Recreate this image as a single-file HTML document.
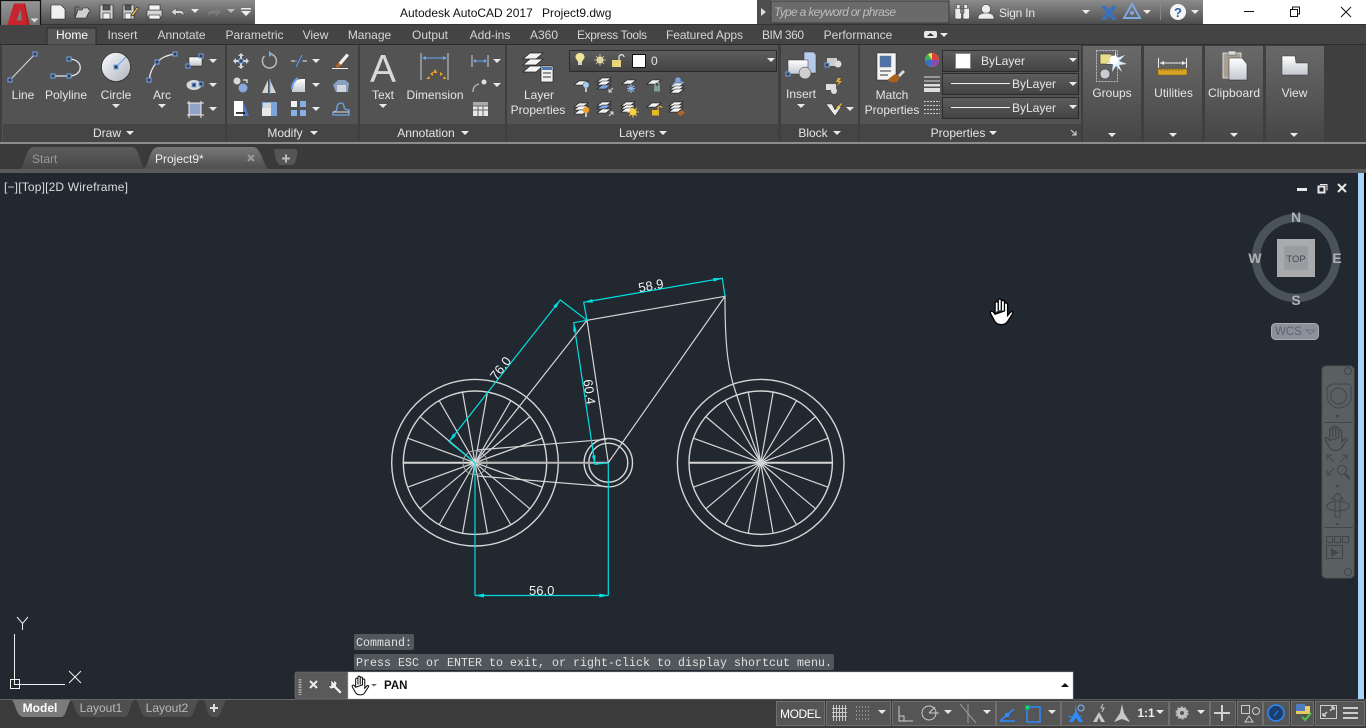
<!DOCTYPE html>
<html><head><meta charset="utf-8"><title>Autodesk AutoCAD 2017</title>
<style>
html,body{margin:0;padding:0;background:#212830;width:1366px;height:728px;overflow:hidden}
svg{display:block;position:absolute;left:0;top:0}
text{font-family:"Liberation Sans",sans-serif;font-size:12px;fill:#e4e6e8}
.m{text-anchor:middle}
.t{fill:#d4d6d8}
.d{fill:#f0f0f0;font-size:13px;text-anchor:middle}
.c{font-family:"Liberation Mono",monospace;font-size:11.6px;fill:#e0e0e0}
.g{fill:none;stroke:#e8e8e8;stroke-width:1.3}
.b{fill:none;stroke:#5f9ef5;stroke-width:1.2}
.s{fill:none;stroke:#c4c4c4;stroke-width:1.4}
</style></head><body>
<svg width="1366" height="728" viewBox="0 0 1366 728" xmlns="http://www.w3.org/2000/svg">
<defs>
<linearGradient id="gT" x1="0" y1="0" x2="0" y2="1"><stop offset="0" stop-color="#8b8b8b"/><stop offset=".5" stop-color="#6d6d6d"/><stop offset="1" stop-color="#4c4c4c"/></linearGradient>
<linearGradient id="gP" x1="0" y1="0" x2="0" y2="1"><stop offset="0" stop-color="#696969"/><stop offset="1" stop-color="#464646"/></linearGradient>
<linearGradient id="gD" x1="0" y1="0" x2="0" y2="1"><stop offset="0" stop-color="#5e5e5e"/><stop offset="1" stop-color="#434343"/></linearGradient>
<linearGradient id="gC" x1="0" y1="0" x2="1" y2="1"><stop offset="0" stop-color="#fbfcff"/><stop offset="1" stop-color="#aeb3bd"/></linearGradient>
<linearGradient id="gF" x1="0" y1="0" x2="0" y2="1"><stop offset="0" stop-color="#ffffff"/><stop offset="1" stop-color="#c3c7cf"/></linearGradient>
<linearGradient id="gA" x1="0" y1="0" x2="0" y2="1"><stop offset="0" stop-color="#969696"/><stop offset="1" stop-color="#5a5a5a"/></linearGradient>
<linearGradient id="gTab" x1="0" y1="0" x2="0" y2="1"><stop offset="0" stop-color="#787878"/><stop offset="1" stop-color="#4e4e4e"/></linearGradient>
<linearGradient id="gTab2" x1="0" y1="0" x2="0" y2="1"><stop offset="0" stop-color="#5c5c5c"/><stop offset="1" stop-color="#484848"/></linearGradient>
<path id="a" d="M-4-2h8l-4 4z" fill="#eaeaea"/>
<rect id="h" x="-2" y="-2" width="4" height="4" fill="#3c3c3c" stroke="#6aa6f8" stroke-width="1"/>
<path id="pl" d="M0 4l5-4h9l-5 4z" fill="#f6f6f6" stroke="#111" stroke-width=".6"/>
<path id="pb" d="M0 4l5-4h9l-5 4z" fill="#7ba4dd" stroke="#111" stroke-width=".6"/>
<path id="hand" d="M7 13V5.500a1.200 1.200 0 0 1 2.400 0V11M9.400 11V3.500a1.200 1.200 0 0 1 2.400 0V11M11.800 11V4.500a1.200 1.200 0 0 1 2.400 0V11.500M14.200 11.500V6.500a1.200 1.200 0 0 1 2.400 0V15l2.200-2.500c1-1 2.500 0 1.600 1.200L17 19c-1 2-3 3-5 3-3 0-5-1-6-4L3.500 13.500c-.7-1.400 1-2.400 2-1.300L7 14z"/>
<g id="wheel" fill="none" stroke="#d6d6d6" stroke-width="1.200">
<circle r="83.300" stroke-width="1.400"/><circle r="71.700" stroke-width="1.400"/>
<line y1="-71.700" y2="71.700" transform="rotate(10)"/><line y1="-71.700" y2="71.700" transform="rotate(30)"/><line y1="-71.700" y2="71.700" transform="rotate(50)"/><line y1="-71.700" y2="71.700" transform="rotate(70)"/><line y1="-71.700" y2="71.700" transform="rotate(90)" stroke-width="2"/><line y1="-71.700" y2="71.700" transform="rotate(110)"/><line y1="-71.700" y2="71.700" transform="rotate(130)"/><line y1="-71.700" y2="71.700" transform="rotate(150)"/><line y1="-71.700" y2="71.700" transform="rotate(170)"/>
</g>
</defs>

<!-- title bar -->
<rect width="1366" height="25" fill="#fff"/>
<rect width="255" height="24" fill="url(#gT)"/>
<rect x="757" width="446" height="24" fill="url(#gT)"/>
<rect y="24" width="1366" height="1" fill="#333"/>
<rect x="757" width="14" height="24" fill="#4e4e4e"/>
<path d="M761 8l5 4-5 4z" fill="#ddd"/>
<rect x="771" y="1" width="178" height="22" fill="#6a6a6a" stroke="#3c3c3c"/>
<text x="774" y="16" style="font-style:italic;fill:#bcbcbc" textLength="122">Type a keyword or phrase</text>
<text x="400" y="17" style="fill:#111">Autodesk AutoCAD 2017</text>
<text x="542" y="17" style="fill:#111">Project9.dwg</text>

<!-- QAT -->
<g stroke="#222" stroke-width=".6">
<path d="M51 5h10l4 4v10H51z" fill="#f0f0f0"/>
<path d="M75 18l3-8h4l1-2h5l1 2h1v2h-1l-3 6z" fill="#cfcfcf"/><path d="M75 18V7h5" fill="none"/>
<path d="M100 5h13v14h-13z" fill="#d0d0d0"/><rect x="103" y="5" width="7" height="5" fill="#555"/><rect x="103" y="13" width="7" height="6" fill="#eee"/>
<path d="M123 5h11v14h-11z" fill="#d0d0d0"/><rect x="125" y="5" width="6" height="5" fill="#555"/><rect x="125" y="13" width="6" height="6" fill="#eee"/><path d="M131 15l6-8 2 1-6 8z" fill="#e6b94a"/>
<rect x="147" y="10" width="15" height="7" rx="1" fill="#d5d5d5"/><rect x="149" y="5" width="11" height="5" fill="#f4f4f4"/><rect x="149" y="15" width="11" height="4" fill="#f4f4f4"/>
</g>
<path d="M171 12l5-4v2.500h4c3 0 4 2 4 6-1-2-2-3-4-3h-4V16z" fill="#d8d8d8" stroke="#333" stroke-width=".5"/>
<path d="M221 12l-5-4v2.500h-4c-3 0-4 2-4 6 1-2 2-3 4-3h4V16z" fill="#7c7c7c"/>
<use href="#a" x="195" y="11"/><use href="#a" x="231" y="11" opacity=".6"/>
<path d="M241 8h10v1.500h-10zM241 11h10l-5 5z" fill="#eee"/>

<!-- A button -->
<rect x=".5" y=".5" width="40" height="40" fill="url(#gA)" stroke="#111" stroke-width="1.200"/>
<path d="M5 32L14 3.500H25L31 32H24L22.800 25H15L12 32zM16.500 20.500H22L20.500 10z" fill="#c8242e" fill-rule="evenodd"/>
<path d="M24 3.500H25L31 32H28.500z" fill="#a51b23"/>
<path d="M30.500 18.500h8l-4 4z" fill="#ddd"/>

<!-- right title -->
<g fill="#ececec" stroke="#333" stroke-width=".5">
<rect x="955" y="8" width="6.500" height="11" rx="1.500"/><rect x="963" y="8" width="6.500" height="11" rx="1.500"/><rect x="956.500" y="4.500" width="3.500" height="4"/><rect x="964" y="4.500" width="3.500" height="4"/><rect x="960.500" y="9" width="3.500" height="4" fill="#888"/>
<circle cx="986" cy="9" r="4.500"/><path d="M978 19c0-5 3-5 6-6h4c3 1 6 1 6 6z"/>
</g>
<text x="999" y="17" textLength="36">Sign In</text>
<path d="M1101 6h5l3 4 3-4h5l-5 7 5 7h-5l-3-4-3 4h-5l5-7z" fill="#3c6fb8"/>
<path d="M1132 4l8 14h-16z" fill="none" stroke="#7fa7e0" stroke-width="2"/><circle cx="1132" cy="13" r="2" fill="#7fa7e0"/>
<use href="#a" x="1086" y="12"/><use href="#a" x="1147" y="12"/><use href="#a" x="1195" y="12"/>
<rect x="1160" y="4" width="1" height="16" fill="#888"/>
<circle cx="1178" cy="12" r="8" fill="#f4f4f4"/><text x="1178" y="17" class="m" style="font-weight:bold;font-size:13px;fill:#2a5fb0">?</text>
<path d="M1244 11.500h10" stroke="#111" stroke-width="1"/>
<path d="M1290.500 9.500h7v7h-7zM1292.500 9.500v-2.500h7v7h-2" fill="none" stroke="#111"/>
<path d="M1341 7l10 10M1351 7l-10 10" stroke="#111"/>

<!-- tab strip -->
<rect y="25" width="1366" height="20" fill="#444"/>
<rect y="44" width="1366" height="1" fill="#2c2c2c"/>
<path d="M47 45V28h49v17z" fill="#565656" stroke="#2c2c2c"/>
<text x="72" y="39" class="m" style="fill:#fff">Home</text>
<text x="122.500" y="39" class="m t">Insert</text>
<text x="181.500" y="39" class="m t">Annotate</text>
<text x="254.500" y="39" class="m t">Parametric</text>
<text x="315.500" y="39" class="m t">View</text>
<text x="369.500" y="39" class="m t">Manage</text>
<text x="430" y="39" class="m t">Output</text>
<text x="490" y="39" class="m t">Add-ins</text>
<text x="544" y="39" class="m t">A360</text>
<text x="612" y="39" class="m t" textLength="70">Express Tools</text>
<text x="704.500" y="39" class="m t" textLength="77">Featured Apps</text>
<text x="783" y="39" class="m t" textLength="42">BIM 360</text>
<text x="858" y="39" class="m t">Performance</text>
<rect x="924" y="31" width="13" height="7" rx="2" fill="#e8e8e8"/><path d="M927 36l3.500-3 3.500 3z" fill="#333"/><use href="#a" x="944" y="35"/>

<!-- ribbon -->
<rect y="45" width="1366" height="98" fill="#3f3f3f"/>
<g>
<rect x="2" y="45" width="223" height="97" fill="#535353"/><rect x="227" y="45" width="131" height="97" fill="#535353"/><rect x="360" y="45" width="145" height="97" fill="#535353"/><rect x="507" y="45" width="271" height="97" fill="#535353"/><rect x="781" y="45" width="77" height="97" fill="#535353"/><rect x="860" y="45" width="221" height="97" fill="#535353"/>
</g>
<g fill="#454545">
<rect x="3" y="124" width="222" height="18"/><rect x="227" y="124" width="131" height="18"/><rect x="360" y="124" width="145" height="18"/><rect x="507" y="124" width="271" height="18"/><rect x="781" y="124" width="77" height="18"/><rect x="860" y="124" width="221" height="18"/>
</g>
<rect x="1083" y="46" width="58" height="96" fill="url(#gP)"/><rect x="1144" y="46" width="58" height="96" fill="url(#gP)"/><rect x="1205" y="46" width="58" height="96" fill="url(#gP)"/><rect x="1266" y="46" width="58" height="96" fill="url(#gP)"/>
<rect y="142" width="1366" height="2" fill="#8d8d8d"/>

<!-- Draw -->
<path d="M10 80L35 54" stroke="#ddd" fill="none"/><use href="#h" x="10" y="80"/><use href="#h" x="35" y="54"/>
<path d="M53 76H69M69 59c15 0 15 17 0 17" class="g"/><use href="#h" x="53" y="76"/><use href="#h" x="69" y="76"/><use href="#h" x="69" y="59"/>
<circle cx="116" cy="67" r="14.500" fill="url(#gC)" stroke="#222" stroke-width=".6"/><path d="M116 67l10-10" stroke="#5f9ef5"/><use href="#h" x="116" y="67"/>
<path d="M149 80c2-14 10-24 26-26" class="g"/><use href="#h" x="149" y="80"/><use href="#h" x="157" y="62"/><use href="#h" x="175" y="54"/>
<text x="23" y="99" class="m">Line</text><text x="66" y="99" class="m">Polyline</text><text x="116" y="99" class="m">Circle</text><text x="162" y="99" class="m">Arc</text>
<use href="#a" x="116" y="106"/><use href="#a" x="162" y="106"/>
<rect x="189" y="57" width="13" height="9" fill="url(#gF)" stroke="#222" stroke-width=".5"/><use href="#h" x="188" y="66"/><use href="#h" x="201" y="56"/>
<ellipse cx="194" cy="85" rx="7.500" ry="5" fill="#d8d8d8"/><use href="#h" x="194" y="85"/><use href="#h" x="201" y="84"/>
<rect x="189" y="103" width="12" height="12" fill="#8fa4c8" stroke="#eee"/><path d="M187 103h17M187 115h17M189 101v17M201 101v17" stroke="#eee" stroke-width="1" fill="none"/>
<use href="#a" x="213" y="61"/><use href="#a" x="213" y="85"/><use href="#a" x="213" y="109"/>
<text x="107" y="137" class="m">Draw</text><use href="#a" x="130" y="133"/>

<!-- Modify -->
<path d="M241 53l3 3h-2v4h4v-2l3 3-3 3v-2h-4v4h2l-3 3-3-3h2v-4h-4v2l-3-3 3-3v2h4v-4h-2z" fill="#d8d8d8"/><use href="#h" x="241" y="61"/>
<path d="M264.500 56a7 7 0 1 0 5-2" class="g" style="stroke:#bbb;stroke-width:1.500"/><path d="M269 51l4 3-4 3z" fill="#7da8e0"/>
<path d="M291 61h6M302 61h5M296 67l6-12" stroke="#5f9ef5" fill="none"/><path d="M291 61h4M303 61h4" stroke="#eee"/>
<path d="M346.500 53.500l2.500 2-8 9.500-2.500-2z" fill="#f0f0f0"/><path d="M338.500 62.500l2.500 2.500-2.500 2.500-3-.5z" fill="#c9651c"/><path d="M332 68.500h16" stroke="#eee"/>
<circle cx="237" cy="81" r="3.500" fill="#d9d9d9"/><circle cx="243" cy="88" r="4.500" fill="#86a8dc"/><path d="M243 80h4v3" class="g"/>
<path d="M268 80v13h-6zM270 80v13h6z" fill="#d4d4d4"/><path d="M270 79v15" stroke="#7da8e0"/>
<path d="M292 92v-3c0-6 4-10 10-10h3v13z" fill="url(#gF)"/><path d="M292 89c0-6 3-9 6-11" stroke="#5f9ef5" stroke-width="2" fill="none"/>
<path d="M333 85l5-5h7l4 3-1 9h-12z" fill="#8aa0c0"/><rect x="337" y="85" width="9" height="7" fill="#cfd5df"/>
<rect x="234" y="101" width="9" height="15" fill="#fff"/><path d="M243 101l6 15h-6z" fill="#4f7cc0"/><path d="M236 113h9" stroke="#000" stroke-width="1.500"/>
<rect x="262" y="102" width="15" height="14" fill="#7aa3de"/><rect x="262" y="108" width="9" height="8" fill="#e8e8e8"/><rect x="263" y="103" width="8" height="5" fill="#d8d8d8"/>
<rect x="291" y="101" width="6" height="6" fill="#f0f0f0"/><rect x="300" y="101" width="6" height="6" fill="#86aee8"/><rect x="291" y="110" width="6" height="6" fill="#86aee8"/><rect x="300" y="110" width="6" height="6" fill="#86aee8"/>
<path d="M333 115v-3c3 0 4-2 4-5 0-2 2-4 4-4s3 2 3 4 2 3 5 3v5z" fill="none" stroke="#6aa6f0" stroke-width="1.300"/><path d="M333 112h16" stroke="#ddd"/>
<use href="#a" x="316" y="61"/><use href="#a" x="316" y="85"/><use href="#a" x="316" y="109"/>
<text x="285" y="137" class="m">Modify</text><use href="#a" x="314" y="133"/>

<!-- Annotation -->
<text x="383" y="82" class="m" style="font-size:39px;fill:#d8d8d8">A</text>
<text x="383" y="99" class="m">Text</text><use href="#a" x="383" y="106"/>
<path d="M421 53v27M448 53v27" stroke="#ccc" fill="none"/><path d="M423 58h23" stroke="#6aa6f0"/><path d="M422 58l4-2v4zM447 58l-4-2v4z" fill="#6aa6f0"/>
<path d="M426 79l3-3 1 3zM430 74l3-2 0 4zM435 69l2.500 4h-4.500zM440 72l3 2-3 2zM444 76l2.500 3h-3.500z" fill="#e8a428"/>
<text x="435" y="99" class="m" textLength="57">Dimension</text>
<path d="M472 55v12M488 55v12" stroke="#ccc"/><path d="M474 61h12" stroke="#6aa6f0"/><path d="M473 61l3-2v4zM487 61l-3-2v4z" fill="#6aa6f0"/>
<path d="M473 92c0-5 2-7 6-8" class="g" style="stroke:#bbb"/><circle cx="484" cy="82" r="2.500" fill="#e0e0e0"/>
<rect x="473" y="102" width="15" height="14" fill="#e8e8e8"/><path d="M473 106h15M473 110h15M478 106v10M483 106v10" stroke="#666" fill="none"/><rect x="473" y="102" width="15" height="3.500" fill="#aaa"/>
<use href="#a" x="497" y="61"/><use href="#a" x="497" y="85"/>
<text x="426" y="137" class="m">Annotation</text><use href="#a" x="465" y="133"/>

<!-- Layers -->
<g stroke="#222" stroke-width=".7" fill="#f4f4f4">
<path d="M523 59l7-6h13l-7 6z"/><path d="M523 65l7-6h13l-7 6z"/><path d="M523 72l7-6h13l-7 6z"/>
</g>
<rect x="541" y="66" width="12" height="16" fill="#f0f0f0" stroke="#222" stroke-width=".7"/><rect x="542" y="67" width="10" height="3" fill="#4e79b7"/><path d="M543 73h8M543 77h8" stroke="#333"/>
<text x="539" y="99" class="m">Layer</text><text x="538" y="114" class="m">Properties</text>
<rect x="569.500" y="50.500" width="207" height="21" fill="url(#gD)" stroke="#2b2b2b"/>
<path d="M580 53c3 0 4.500 2 4.500 4 0 2-2 3-2.500 5h-4c-.5-2-2.500-3-2.500-5 0-2 1.500-4 4.500-4z" fill="#f3e59a"/><rect x="578" y="62" width="4" height="3" fill="#ccc"/>
<circle cx="600" cy="60" r="3.500" fill="#f2e3a0"/><path d="M594 60h12M600 54v12M596 56l8 8M604 56l-8 8" stroke="#d8ccaa" stroke-width=".8"/>
<rect x="612" y="60" width="9" height="7" fill="#e8d47a"/><path d="M619 60v-3c0-3 5-3 5 0" fill="none" stroke="#eee" stroke-width="1.200"/>
<rect x="632.500" y="54.500" width="13" height="13" fill="#fff" stroke="#111"/>
<text x="651" y="65">0</text><use href="#a" x="771" y="60"/>
<!-- small layer icons -->
<use href="#pl" x="574" y="81"/><circle cx="586" cy="85" r="3.200" fill="#a9cdf2" stroke="#222" stroke-width=".4"/><rect x="585.200" y="88" width="1.600" height="4" fill="#ddd"/>
<use href="#pl" x="597" y="78"/><use href="#pl" x="597" y="81"/><use href="#pb" x="597" y="85"/><path d="M609 92l4-4M609 89v3h3" stroke="#ddd" fill="none"/>
<use href="#pl" x="622" y="80"/><path d="M631 84v9M627 88.500h8M628 85.500l6 6M634 85.500l-6 6" stroke="#8ab7ea" stroke-width="1.200"/>
<use href="#pl" x="647" y="80"/><rect x="654" y="86" width="6" height="5.500" fill="#7f9f9a"/><path d="M655 86v-2c0-2 4-2 4 0v2" stroke="#9fbfba" fill="none"/>
<use href="#pl" x="670" y="83"/><use href="#pl" x="670" y="86"/><use href="#pl" x="670" y="89"/><circle cx="678" cy="80" r="2.800" fill="#7ba4dd"/><path d="M673 85l3-3h6l2 1" stroke="#7ba4dd" fill="none" stroke-width="1.500"/>
<use href="#pl" x="574" y="103"/><use href="#pl" x="574" y="106"/><use href="#pl" x="574" y="110"/><circle cx="586" cy="110" r="3.200" fill="#f0a030"/><rect x="585.200" y="113" width="1.600" height="4" fill="#ddd"/>
<use href="#pl" x="597" y="102"/><use href="#pb" x="597" y="105"/><use href="#pl" x="597" y="109"/><path d="M609 116l4-4M610 112h3v3" stroke="#ddd" fill="none"/>
<use href="#pl" x="621" y="102"/><use href="#pl" x="621" y="105"/><use href="#pl" x="621" y="108"/><circle cx="633" cy="112" r="3.500" fill="#f6d23e"/><path d="M627 112h12M633 106v12M629 108l8 8M637 108l-8 8" stroke="#f6d23e" stroke-width=".8"/>
<use href="#pl" x="647" y="103"/><rect x="652" y="110" width="7" height="5.500" fill="#e8b820"/><path d="M658 110v-2c0-2 4-2 4 0" stroke="#eebb30" fill="none"/>
<use href="#pl" x="669" y="102"/><use href="#pl" x="669" y="105"/><use href="#pl" x="669" y="108"/><path d="M677 113l5-3 3 3-5 3z" fill="#b0662a"/>
<text x="637" y="137" class="m">Layers</text><use href="#a" x="663" y="133"/>

<!-- Block -->
<path d="M804 52h10l2 3v18h-12z" fill="#b6cbea" stroke="#333" stroke-width=".5"/><rect x="788" y="60" width="20" height="14" fill="url(#gF)" stroke="#333" stroke-width=".5"/><circle cx="805" cy="73" r="6" fill="#cfcfcf" stroke="#333" stroke-width=".5"/><use href="#h" x="788" y="74"/>
<text x="801" y="98" class="m">Insert</text><use href="#a" x="801" y="106"/>
<rect x="827" y="58" width="10" height="8" fill="#ccc"/><circle cx="838" cy="64" r="3.500" fill="#ddd"/><use href="#h" x="827" y="65"/>
<rect x="826" y="84" width="10" height="6" fill="#ddd"/><path d="M838 78l-2 4h3l-2 4 5-5h-3l2-3z" fill="#f0a928"/><circle cx="834" cy="91" r="3" fill="#ddd"/>
<path d="M826 104h6l3 6 3-5 3 2-6 9z" fill="#eee" stroke="#222" stroke-width=".5"/><path d="M836 109l5-6 1 1-5 6z" fill="#e8b020"/>
<use href="#a" x="850" y="109"/>
<text x="813" y="137" class="m">Block</text><use href="#a" x="837" y="133"/>

<!-- Properties -->
<rect x="877" y="53" width="19" height="27" fill="#f4f4f4" stroke="#222" stroke-width=".5"/><rect x="880" y="56" width="11" height="11" fill="#4b73aa" stroke="#777" stroke-width=".5"/><path d="M880 71h11M880 75h8" stroke="#333"/>
<path d="M887 80l8-6 5 3-3 5c-4 1-7 0-10-2z" fill="#a9631f"/><path d="M898 75l5-5 2 2-5 5z" fill="#dcdcdc"/>
<text x="892" y="99" class="m">Match</text><text x="892" y="114" class="m">Properties</text>
<circle cx="932" cy="60" r="7" fill="#e8e840"/><path d="M932 60V53a7 7 0 0 1 7 7z" fill="#e04040"/><path d="M932 60h7a7 7 0 0 1-7 7z" fill="#8a4bb0"/><path d="M932 60v7a7 7 0 0 1-7-7z" fill="#3a70c8"/><path d="M932 60h-7a7 7 0 0 1 3-6z" fill="#40b060"/>
<path d="M924 77h16M924 81h16" stroke="#ddd"/><rect x="924" y="84" width="16" height="2.500" fill="#ddd"/><rect x="924" y="88" width="16" height="4" fill="#ddd"/>
<path d="M924 101.500h16M924 105.500h16M924 109.500h16M924 113.500h16" stroke="#ccc" stroke-dasharray="2 1" fill="none"/>
<rect x="942.500" y="50.500" width="136" height="21" fill="url(#gD)" stroke="#2b2b2b"/>
<rect x="942.500" y="73.500" width="136" height="21" fill="url(#gD)" stroke="#2b2b2b"/>
<rect x="942.500" y="97.500" width="136" height="21" fill="url(#gD)" stroke="#2b2b2b"/>
<rect x="955.500" y="53.500" width="15" height="15" fill="#fff" stroke="#888"/>
<text x="981" y="65">ByLayer</text>
<path d="M951 83.500h59M951 107.500h59" stroke="#eee"/>
<text x="1012" y="88">ByLayer</text><text x="1012" y="112">ByLayer</text>
<use href="#a" x="1073" y="60"/><use href="#a" x="1073" y="84"/><use href="#a" x="1073" y="107"/>
<text x="958" y="137" class="m">Properties</text><use href="#a" x="993" y="133"/>
<path d="M1071 130l5 5M1076 131v4h-4" stroke="#ddd" fill="none"/>

<!-- collapsed -->
<rect x="1096.500" y="50.500" width="21" height="31" fill="none" stroke="#bbb" stroke-dasharray="2 1"/>
<rect x="1100" y="54" width="11" height="10" fill="#e8dc88" stroke="#222" stroke-width=".5"/><circle cx="1105" cy="74" r="5" fill="#c8ccd2" stroke="#222" stroke-width=".5"/>
<path d="M1115 50l2 8 8-3-6 6 8 3-8 1 3 7-6-6-4 6 1-8-7 0 7-3-3-7 5 5z" fill="#dcefff"/><circle cx="1114" cy="60" r="4.500" fill="#fff"/>
<text x="1112" y="97" class="m">Groups</text><use href="#a" x="1112" y="135"/>
<path d="M1158.500 58v10M1186.500 58v10M1160 63h26" stroke="#eee" fill="none"/><path d="M1160 63l4-2v4zM1186 63l-4-2v4z" fill="#eee"/>
<rect x="1158" y="69" width="29" height="6" fill="#d8a428" stroke="#7a5a10" stroke-width=".5"/><path d="M1161 69v2M1164 69v2M1167 69v2M1170 69v2M1173 69v2M1176 69v2M1179 69v2M1182 69v2" stroke="#7a5a10" stroke-width=".7"/>
<text x="1173.500" y="97" class="m">Utilities</text><use href="#a" x="1173" y="135"/>
<rect x="1223" y="53" width="18" height="25" fill="#a89f92" stroke="#eee" stroke-width=".8"/><rect x="1228" y="51" width="8" height="4" fill="#ddd" stroke="#444" stroke-width=".5"/>
<path d="M1229 58h13l5 6v16h-18z" fill="url(#gF)" stroke="#222" stroke-width=".5"/>
<text x="1234" y="97" class="m" textLength="52">Clipboard</text><use href="#a" x="1234" y="135"/>
<path d="M1282 56h13l1 7h12v12h-26z" fill="url(#gF)" stroke="#333" stroke-width=".5"/>
<text x="1294.500" y="97" class="m">View</text><use href="#a" x="1294" y="135"/>

<!-- file tabs -->
<rect y="144" width="1366" height="25" fill="#3a3a3a"/>
<rect y="169" width="1366" height="4" fill="#5a5a5a"/>
<path d="M20 169c5-2 5-22 14-22h98c8 0 8 22 14 22z" fill="url(#gTab2)"/>
<path d="M143 169c6-2 6-22 15-22h95c9 0 10 20 16 22z" fill="url(#gTab)"/>
<path d="M274 149h20c3 0 4 2 3 6-1 6-2 10-6 10h-10c-4 0-6-8-7-16z" fill="#555"/>
<text x="32" y="163" style="fill:#9a9a9a">Start</text>
<text x="155" y="163" style="fill:#eee">Project9*</text>
<path d="M248 155l6 6M254 155l-6 6" stroke="#999" stroke-width="2"/>
<path d="M282 158.500h8M286 154.500v8" stroke="#bbb" stroke-width="2"/>

<!-- canvas -->
<rect y="173" width="1358" height="527" fill="#212830"/>
<rect x="1358" y="173" width="6" height="527" fill="#a6d3f6"/>
<rect x="1364" y="173" width="2" height="527" fill="#000"/>
<text x="4" y="191" style="fill:#dcdcdc" textLength="124">[−][Top][2D Wireframe]</text>
<rect x="1297" y="188" width="10" height="3" fill="#e8e8e8"/>
<path d="M1318.500 186.500h6v6h-6z" fill="none" stroke="#e8e8e8" stroke-width="2"/><path d="M1320 184.500h7v6" fill="none" stroke="#e8e8e8"/>
<path d="M1338 184l8 8M1346 184l-8 8" stroke="#e8e8e8" stroke-width="2"/>

<!-- bicycle -->
<use href="#wheel" x="475" y="462.700"/>
<use href="#wheel" x="760.700" y="462.700"/>
<g fill="none" stroke="#d6d6d6" stroke-width="1.200">
<circle cx="475" cy="462.700" r="12" stroke="#aaa" stroke-width="1"/>
<circle cx="608.300" cy="462.700" r="24.200" stroke-width="1.400"/><circle cx="608.300" cy="462.700" r="19.500" stroke-width="1.400"/>
<path d="M475 462.700H608.300" stroke-width="2" stroke="#b5b5b5"/>
<path d="M587 320.300L725 296.300L608.300 462.700L587 320.300L475 462.700"/>
<path d="M476.700 450L606.700 439.300M478 476L608 486.700"/>
<path d="M725 296.300C725 340 727 366 735 390C744 418 752 440 760.700 462.700"/>
</g>
<!-- dims -->
<g fill="none" stroke="#00e0e0" stroke-width="1.200">
<path d="M475 462.700V595.500M608.300 462.700V595.500M475 595.500H608.300"/>
<path d="M587 320.300L583.700 302.300L722.300 278.300L725 296.300"/>
<path d="M475 462.700L449 441.700L560.300 300L587 320.300"/>
<path d="M587 320.300L573.700 322.700L595 464.300L608.300 462.700"/>
</g>
<g fill="#00e0e0">
<path d="M475 595.500l9-2v4zM608.300 595.500l-9-2v4z"/>
<path d="M583.700 302.300L592.900 302.600 592.300 299zM722.300 278.300L713.700 281.600 713.100 278z"/>
<path d="M449 441.700L456 435.700 453.200 433.500zM560.300 300L556.100 308.200 553.300 306z"/>
<path d="M573.700 322.700L576.800 331.300 573.200 331.900zM595 464.300L595.500 455.100 591.900 455.700z"/>
</g>
<text class="d" transform="translate(541.700 595)">56.0</text>
<text class="d" transform="translate(651.700 290) rotate(-10)">58.9</text>
<text class="d" transform="translate(504 371) rotate(-52)">76.0</text>
<text class="d" transform="translate(585 392.500) rotate(82)">60.4</text>

<!-- cursor hand -->
<g transform="translate(986 296) scale(1.300)"><use href="#hand" fill="#fff" stroke="#000" stroke-width="1"/></g>

<!-- viewcube -->
<circle cx="1296" cy="258" r="40" fill="none" stroke="#4a525a" stroke-width="8.500"/>
<text x="1296" y="222" class="m" style="font-size:14px;font-weight:bold;fill:#aeb2b6">N</text>
<text x="1255" y="263" class="m" style="font-size:14px;font-weight:bold;fill:#aeb2b6">W</text>
<text x="1337" y="263" class="m" style="font-size:14px;font-weight:bold;fill:#aeb2b6">E</text>
<text x="1296" y="305" class="m" style="font-size:14px;font-weight:bold;fill:#aeb2b6">S</text>
<rect x="1277" y="239" width="38" height="38" fill="#a9aaab"/><rect x="1284" y="246" width="24" height="24" fill="#989da2"/>
<text x="1296" y="262" class="m" style="font-size:9.500px;fill:#43484e">TOP</text>
<rect x="1271.500" y="323.500" width="47" height="16" rx="4" fill="#8c8f9c" stroke="#a9abb6"/>
<text x="1275" y="335" style="fill:#5f636e;font-size:11.500px">WCS</text><path d="M1306 330h9l-4.500 4z" fill="none" stroke="#6f7380"/>

<!-- nav bar -->
<rect x="1322" y="366" width="32" height="212" rx="4" fill="#5a5f62" stroke="#4c5154"/>
<g fill="none" stroke="#42474b" stroke-width="1.100">
<circle cx="1348" cy="371" r="3.500"/><circle cx="1348" cy="572" r="3.500"/>
<path d="M1327 392v-3c0-3 3-4 5-5h16c2 0 3 2 3 4v10c0 5-6 10-12 10-7 0-12-6-12-12z"/><circle cx="1338.500" cy="396" r="8"/>
<path d="M1324 422.500h29M1324 527.500h29"/>
<g transform="translate(1321 423) scale(1.250)"><use href="#hand"/></g>
<path d="M1327 455l7 7M1327 455v5M1327 455h5M1347 455l-7 7M1347 455h-5M1347 455v5M1327 475l7-7M1327 475v-5M1327 475h5"/>
<circle cx="1342" cy="470" r="4.500"/><path d="M1345 474l5 5" stroke-width="2.500"/>
<path d="M1338 493l5 6h-3v18h-5v-18h-3z"/><ellipse cx="1338" cy="506" rx="11" ry="5"/>
<rect x="1326.500" y="536.500" width="6" height="6"/><rect x="1334.500" y="536.500" width="6" height="6"/><rect x="1342.500" y="536.500" width="6" height="6"/>
<rect x="1326.500" y="545.500" width="16" height="13"/>
</g>
<path d="M1331 548l8 4.500-8 4.500z" fill="#42474b"/>
<path d="M1335 415h5l-2.500 3zM1335 485h5l-2.500 3zM1335 523h5l-2.500 3z" fill="#42474b"/>

<!-- UCS -->
<g fill="none" stroke="#eee" stroke-width="1">
<path d="M14.500 634V684M14 684.500H65"/><rect x="10.500" y="679.500" width="9" height="9"/>
<path d="M17 617l5.500 6.500L28 617M22.500 623.500V630"/>
<path d="M69 671l12 12M81 671l-12 12"/>
</g>

<!-- command -->
<rect x="354" y="634" width="60" height="16" rx="2" fill="#52575b"/>
<text x="356" y="646" class="c" textLength="56">Command:</text>
<rect x="354" y="654" width="480" height="16" rx="2" fill="#52575b"/>
<text x="356" y="666" class="c" textLength="476">Press ESC or ENTER to exit, or right-click to display shortcut menu.</text>
<rect x="295" y="672" width="54" height="27" rx="2" fill="#5a5a5a" stroke="#777" stroke-width=".6"/>
<path d="M300 679v16" stroke="#aaa" stroke-width="3" stroke-dasharray="1.500 1"/>
<path d="M310 681l7 7M317 681l-7 7" stroke="#eee" stroke-width="2"/>
<path d="M331 680l3 3 0-3 3 3-1 3 6 6-2 2-6-6-3 1-3-3h3z" fill="#eee" stroke="#222" stroke-width=".4"/>
<rect x="348" y="672" width="725" height="27" fill="#fff" stroke="#bbb" stroke-width=".5"/>
<g transform="translate(349 674) scale(.95)"><use href="#hand" fill="#fff" stroke="#111" stroke-width="1.100"/></g>
<path d="M371 684h6l-3 2.500z" fill="#666"/>
<text x="384" y="689" style="fill:#111;font-weight:bold;font-size:11.500px">PAN</text>
<path d="M1061 687l4-4 4 4z" fill="#111"/>

<!-- layout tabs -->
<rect y="699" width="1366" height="29" fill="#3b3b3b"/>
<rect x="0" y="699" width="295" height="1" fill="#666"/>
<rect x="295" y="699" width="1071" height="1" fill="#555"/>
<path d="M12 700c4 4 4 17 12 17h38c5-2 5-13 9-17z" fill="#7b7b7b"/>
<path d="M71 700c4 4 4 17 12 17h42c5-2 5-13 9-17z" fill="#4f4f4f"/>
<path d="M136 700c4 4 4 17 12 17h42c5-2 5-13 9-17z" fill="#4f4f4f"/>
<path d="M204 700c3 4 2 17 10 17h3c5-2 6-13 9-17z" fill="#4f4f4f"/>
<text x="40" y="712" class="m" style="fill:#fff;font-weight:bold">Model</text>
<text x="101" y="712" class="m" style="fill:#b8b8b8">Layout1</text>
<text x="167" y="712" class="m" style="fill:#b8b8b8">Layout2</text>
<path d="M210 708h8M214 704v8" stroke="#ddd" stroke-width="2"/>

<!-- status bar -->
<g fill="#555" stroke="#6f6f6f">
<rect x="776.500" y="701.500" width="48" height="24"/><rect x="826.500" y="701.500" width="64" height="24"/><rect x="892.500" y="701.500" width="103" height="24"/><rect x="996.500" y="701.500" width="64" height="24"/><rect x="1061.500" y="701.500" width="107" height="24"/><rect x="1169.500" y="701.500" width="40" height="24"/><rect x="1210.500" y="701.500" width="25" height="24"/><rect x="1237.500" y="701.500" width="25" height="24"/><rect x="1263.500" y="701.500" width="26" height="24"/><rect x="1291.500" y="701.500" width="22" height="24"/><rect x="1315.500" y="701.500" width="49" height="24"/>
</g>
<text x="800.500" y="718" class="m" style="fill:#fff" textLength="41">MODEL</text>
<g stroke="#ccc" fill="none">
<path d="M833.500 705v16M836.500 705v16M839.500 705v16M842.500 705v16M845.500 705v16M832 708.500h15M832 712.500h15M832 716.500h15"/>
<path d="M856 707h14M856 711h14M856 715h14M856 719h14" stroke-dasharray="1 2"/>
<path d="M899 706v15h14M899 716h5v5"/>
<circle cx="929" cy="713" r="7"/><path d="M929 713l6-6M929 713h10"/>
<path d="M960 704l16 19M968 704v19" stroke="#999"/>
</g>
<use href="#a" x="882" y="712"/><use href="#a" x="948" y="712"/><use href="#a" x="987" y="712"/><use href="#a" x="1052" y="712"/><use href="#a" x="1160" y="712"/><use href="#a" x="1201" y="712"/>
<path d="M1000 721l14-12M1000 721h15" stroke="#2d8cff" stroke-width="1.600" fill="none"/><rect x="1005" y="713" width="4" height="4" fill="#2d8cff"/>
<rect x="1027" y="707" width="13" height="15" fill="none" stroke="#2d8cff" stroke-width="1.500"/><rect x="1025" y="705" width="5" height="5" fill="#0a7"/><rect x="1026.500" y="706.500" width="2" height="2" fill="#4f4"/>
<path d="M1075 704v8l-6 10h4l3-5 3 5h4l-6-10z" fill="#2d8cff"/><circle cx="1081" cy="708" r="3" fill="none" stroke="#7fbaff"/><path d="M1068 716l7 2 7-2" stroke="#2d8cff" fill="none"/>
<path d="M1099 704v8l-6 10h4l2-5 2 5h4l-6-10z" fill="#c8c8c8"/><path d="M1103 704l-2 4h3l-2 4" stroke="#c8c8c8" fill="none"/>
<path d="M1122 704l-2 9-6 9 8-3 8 3-6-9z" fill="#c8c8c8"/>
<text x="1146" y="717" class="m" style="fill:#eee;font-size:12px;font-weight:bold">1:1</text>
<circle cx="1182" cy="713" r="5.500" fill="#c0c0c0" stroke="#bbb" stroke-width="2" stroke-dasharray="2 1.500"/><circle cx="1182" cy="713" r="2" fill="#555"/>
<path d="M1222 705v16M1214 713h16" stroke="#d0d0d0" stroke-width="2"/>
<rect x="1241.500" y="705.500" width="8" height="8" fill="none" stroke="#ccc"/><circle cx="1256" cy="711" r="3.500" fill="none" stroke="#ccc"/><path d="M1249 716l4 6h-8z" fill="none" stroke="#ccc"/>
<circle cx="1276" cy="713" r="8" fill="#1d3f6e" stroke="#2d8cff" stroke-width="1.500"/><path d="M1274 716l4-5" stroke="#2d8cff"/>
<path d="M1296 706h14v8h-14z" fill="#e6cc60"/><rect x="1296" y="704" width="9" height="7" fill="#4f7cc0"/><path d="M1302 717l3 3 6-7" fill="none" stroke="#4fc050" stroke-width="2"/>
<rect x="1320.500" y="705.500" width="16" height="13" fill="none" stroke="#ccc"/><path d="M1323 716l4-4M1334 707l-4 4M1323 716v-3M1323 716h3M1334 707v3M1334 707h-3" stroke="#ccc" stroke-width="1.500" fill="none"/>
<path d="M1343 708h15M1343 713h15M1343 718h15" stroke="#ccc" stroke-width="2"/>
</svg>
</body></html>
